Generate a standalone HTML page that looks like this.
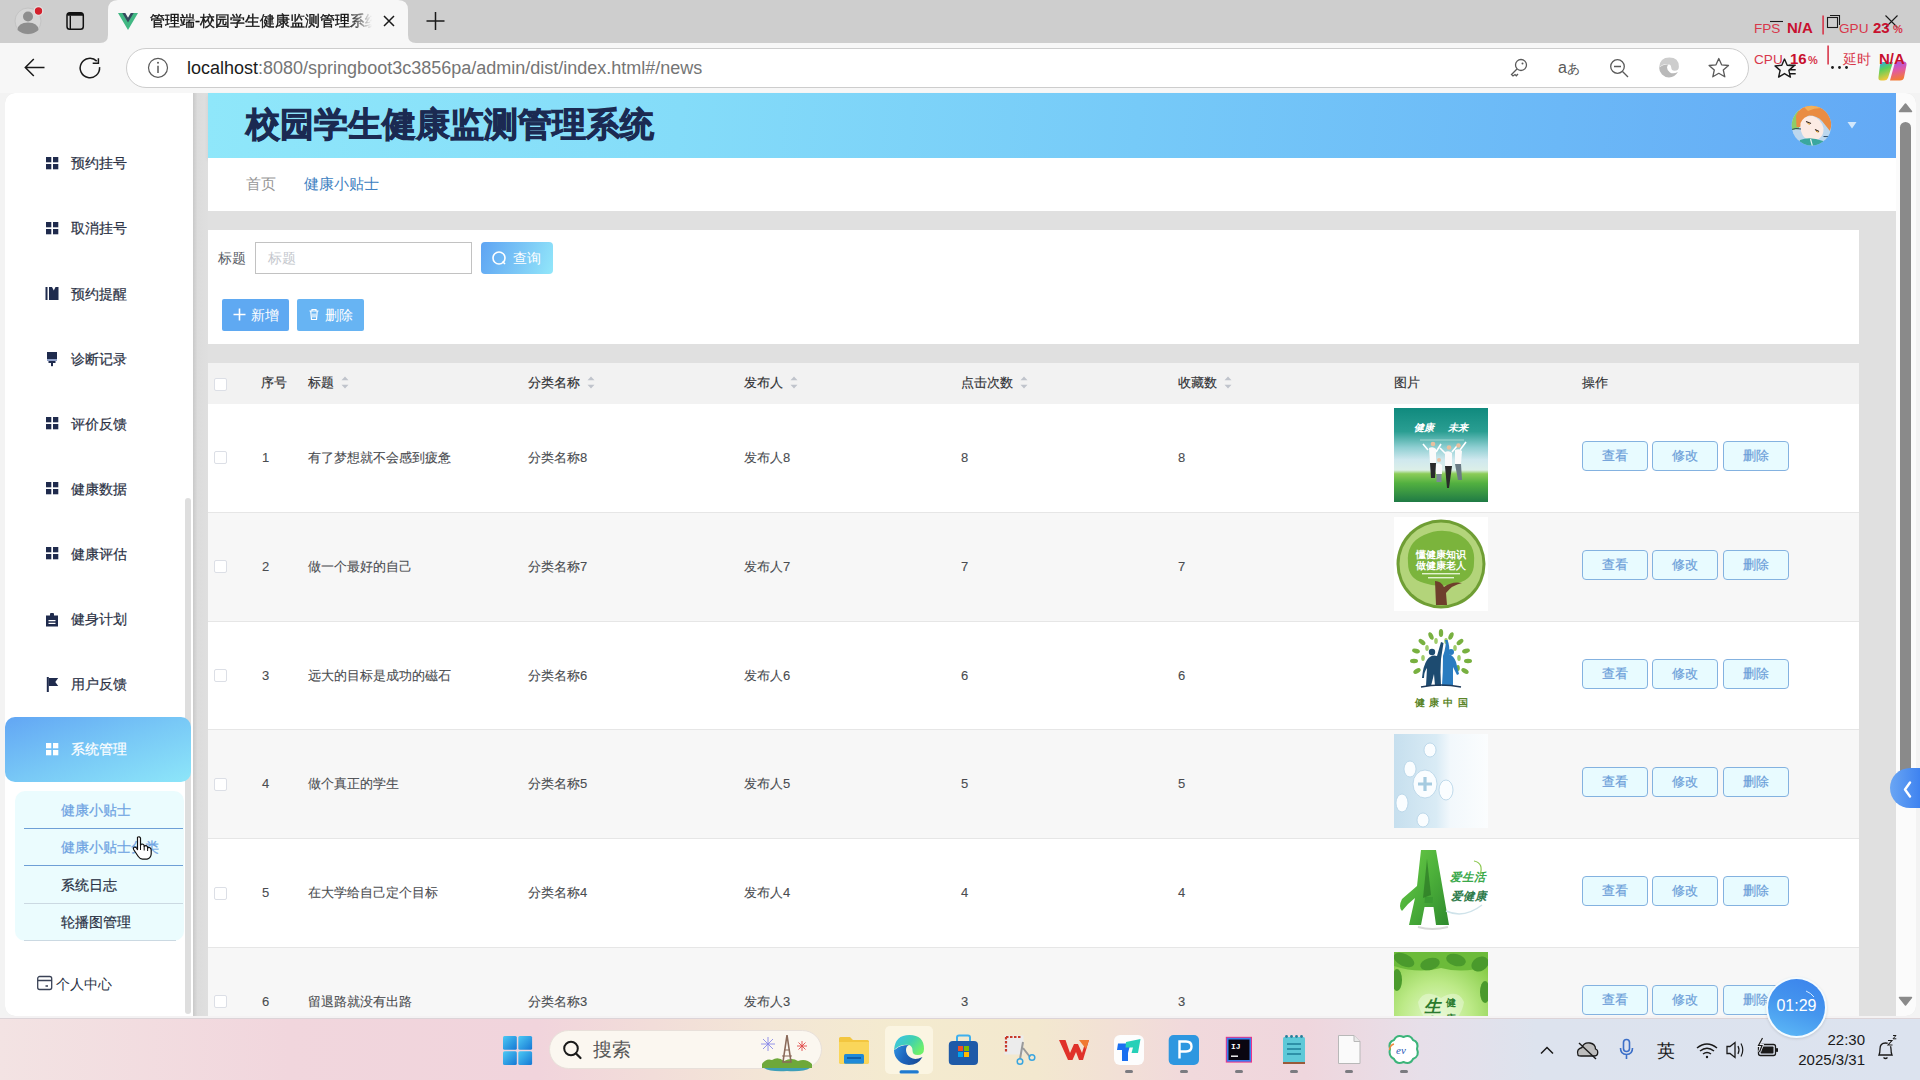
<!DOCTYPE html>
<html><head><meta charset="utf-8">
<style>
*{box-sizing:border-box;margin:0;padding:0}
html,body{width:1920px;height:1080px;overflow:hidden;background:#f3f3f3;font-family:"Liberation Sans",sans-serif;}
.abs{position:absolute}
#tabbar{left:0;top:0;width:1920px;height:43px;background:#cecece}
#tab{left:108px;top:0;width:300px;height:43px;background:#f7f7f7;border-radius:0 0 0 0}
#toolbar{left:0;top:43px;width:1920px;height:50px;background:#f7f7f7}
#addr{left:126px;top:48px;width:1623px;height:40px;background:#fff;border:1px solid #cdcdcd;border-radius:20px}
#viewport{left:0;top:93px;width:1916px;height:923px;background:#e0e0e0;overflow:hidden;border-radius:0 0 10px 10px}
#sidebar{left:5px;top:0;width:188px;height:923px;background:#fff;border-radius:10px 0 0 10px}
#sbstrip{left:193px;top:0;width:15px;height:923px;background:linear-gradient(90deg,#c9c9c9,#dcdcdc 30%,#dfdfdf)}
#taskbar{left:0;top:1019px;width:1920px;height:61px;background:linear-gradient(90deg,#f3e3e3 0%,#f1d6dd 15%,#f1d4dc 28%,#f3e6d6 40%,#f4ebcf 47%,#f3e8cf 54%,#f1d9dc 62%,#efd6dd 68%,#e7dfe9 74%,#dde3ee 80%,#dce3ef 100%)}

.menu{left:71px;font-size:14px;line-height:22px;color:#2b3245;white-space:nowrap;-webkit-text-stroke:0.2px currentColor}
.sub{left:61px;font-size:14px;line-height:22px;color:#2a3245;white-space:nowrap;-webkit-text-stroke:0.2px currentColor}
#viewport{left:5px;top:93px;width:1911px;height:923px;background:#e0e0e0;border-radius:10px 10px 10px 10px}
#sidebar{left:5px;top:93px;width:188px;height:923px;background:#fff;border-radius:10px 0 0 10px}
#sbstrip{left:193px;top:93px;width:15px;height:923px;background:linear-gradient(90deg,#c9c9c9,#dcdcdc 30%,#dfdfdf)}
#header{left:208px;top:93px;width:1688px;height:65px;background:linear-gradient(95deg,#8fe7fa 0%,#84dcf9 28%,#76caf8 55%,#6bb8f7 80%,#63a9f5 100%);box-shadow:0 2px 4px rgba(0,0,0,0.08)}
#crumb{left:208px;top:158px;width:1688px;height:53px;background:#fff}
#search{left:208px;top:230px;width:1651px;height:114px;background:#fff}
#table{left:208px;top:363px;width:1651px;height:653px;background:#fff}
#vscroll{left:1896px;top:93px;width:20px;height:923px;background:#fbfbfb;border-radius:0 10px 10px 0}
.cb{width:13px;height:13px;border:1px solid #dcdfe6;border-radius:2px;background:#fff}
.th{font-size:13px;line-height:22px;color:#2f3033;white-space:nowrap;-webkit-text-stroke:0.15px currentColor}
.td{font-size:13px;line-height:22px;color:#4a4c50;white-space:nowrap;-webkit-text-stroke:0.1px currentColor}
.opb{width:66px;height:30px;border:1px solid #84b2e0;border-radius:4px;background:#e8fbff;color:#6d9fd9;font-size:13px;line-height:28px;text-align:center;-webkit-text-stroke:0.2px currentColor}
</style></head><body>

<div id="tabbar" class="abs"></div>
<svg class="abs" style="left:0;top:0" width="460" height="44">
  <!-- profile -->
  <circle cx="28" cy="21" r="13" fill="#d6d6d6" stroke="#c4c4c4" stroke-width="1"/>
  <circle cx="28" cy="16.5" r="5" fill="#8e8e8e"/>
  <path d="M17.5 30 Q18 22.5 28 22.5 Q38 22.5 38.5 30 Q34 34 28 34 Q22 34 17.5 30Z" fill="#8e8e8e"/>
  <circle cx="38.5" cy="11" r="4.3" fill="#d4202c" stroke="#e2e2e2" stroke-width="1.2"/>
  <!-- tab actions -->
  <rect x="67" y="12.8" width="16.3" height="16.5" rx="2.8" fill="none" stroke="#111" stroke-width="1.5"/>
  <path d="M67.5 14.5 Q67.5 12.5 70 12.5 H80.5 Q83 12.5 83 14.5 V15.8 H67.5Z" fill="#111"/>
  <path d="M70.3 15.5 V29" stroke="#111" stroke-width="1.4" fill="none"/>
  <!-- tab shape -->
  <path d="M100 43 Q108 43 108 35 V10 Q108 0 118 0 H398 Q408 0 408 10 V35 Q408 43 416 43Z" fill="#f7f7f7"/>
  <!-- vue logo -->
  <path d="M118 13 H124.5 L128 19 L131.5 13 H138 L128 30Z" fill="#41b883"/>
  <path d="M122.3 13 H125.3 L128 17.8 L130.7 13 H133.7 L128 22.5Z" fill="#35495e"/>
  <!-- close -->
  <path d="M384 16 L394 26 M394 16 L384 26" stroke="#1a1a1a" stroke-width="1.5"/>
  <!-- plus -->
  <path d="M435.5 12 V30 M426.5 21 H444.5" stroke="#1a1a1a" stroke-width="1.5"/>
</svg>
<div class="abs" style="left:150px;top:10px;width:222px;height:24px;overflow:hidden;white-space:nowrap;font-size:15px;line-height:22px;color:#111;-webkit-text-stroke:0.35px #111;-webkit-mask-image:linear-gradient(90deg,#000 90%,transparent 100%)">管理端-校园学生健康监测管理系统</div>
<div id="toolbar" class="abs"></div>
<svg class="abs" style="left:0;top:43px" width="180" height="50">
  <path d="M25.5 24.5 H44.5 M33.8 16 L25.3 24.5 L33.8 33" stroke="#1a1a1a" stroke-width="1.5" fill="none"/>
  <path d="M99.56 24.15 A9.7 9.7 0 1 1 96.76 18.14" stroke="#1a1a1a" stroke-width="1.5" fill="none"/>
  <path d="M98.4 15.3 V20.3 H92.7" stroke="#1a1a1a" stroke-width="1.5" fill="none"/>
</svg>
<div id="addr" class="abs"></div>
<svg class="abs" style="left:140px;top:50px" width="40" height="36">
  <circle cx="18" cy="17.8" r="9.5" fill="none" stroke="#5a5a5a" stroke-width="1.2"/>
  <path d="M18 15.8 V23" stroke="#5a5a5a" stroke-width="1.5"/>
  <circle cx="18" cy="12.8" r="1" fill="#5a5a5a"/>
</svg>
<div class="abs" style="left:187px;top:55.5px;font-size:18px;line-height:24px;color:#757575;white-space:nowrap"><span style="color:#1b1b1b">localhost</span>:8080/springboot3c3856pa/admin/dist/index.html#/news</div>
<svg class="abs" style="left:1500px;top:50px" width="420" height="40">
  <!-- key -->
  <circle cx="21" cy="15" r="5.5" fill="none" stroke="#5a5a5a" stroke-width="1.3"/>
  <circle cx="22.5" cy="13.5" r="1" fill="#5a5a5a"/>
  <path d="M17 19 L11.5 24.5 L13 26 L15 24.5 L16.3 25.8 L18 24" fill="none" stroke="#5a5a5a" stroke-width="1.3"/>
  <!-- a あ -->
  <text x="58" y="23" font-size="16" fill="#5a5a5a" font-family="Liberation Sans">a</text>
  <text x="67" y="23" font-size="12.5" fill="#5a5a5a">あ</text>
  <!-- zoom out -->
  <circle cx="117.5" cy="16.5" r="6.8" fill="none" stroke="#5a5a5a" stroke-width="1.3"/>
  <path d="M114 16.5 H121 M122.5 21.5 L128 27" stroke="#5a5a5a" stroke-width="1.4"/>
  <!-- edge -->
  <g transform="translate(169,17.5) scale(0.66) translate(-909,-31)">
    <path d="M894 31 A15 15 0 0 0 909 46 Q918 46 922.5 38 Q915 41.5 910.5 38.5 Q906 35.5 906 31 Q906 27 909 26 Q900 26 896 30Z" fill="#b9b9b9"/>
    <path d="M894 31 Q895 16 909.5 16 Q924 16 924 30 Q924 36 917.5 36 Q912.5 36 912.5 31.5 Q912.5 27 909 26 Q900 25 894 31Z" fill="#cdcdcd"/>
  </g>
  <!-- star -->
  <path d="M218.8 8.5 L221.6 14.8 L228.5 15.5 L223.3 20 L224.8 26.8 L218.8 23.3 L212.8 26.8 L214.3 20 L209.1 15.5 L216 14.8Z" fill="none" stroke="#5a5a5a" stroke-width="1.3" stroke-linejoin="round"/>
</svg>
<svg class="abs" style="left:1740px;top:0" width="180" height="93">
  <!-- window controls -->
  <path d="M30 21.5 H43" stroke="#1a1a1a" stroke-width="1.1"/>
  <rect x="87.5" y="17.5" width="10" height="10" fill="none" stroke="#1a1a1a" stroke-width="1.1"/>
  <path d="M90 15.5 H99.5 V25" fill="none" stroke="#1a1a1a" stroke-width="1.1"/>
  <path d="M145.5 15.5 L157.5 27.5 M157.5 15.5 L145.5 27.5" stroke="#1a1a1a" stroke-width="1.1"/>
  <!-- favorites -->
  <g transform="translate(44.5,68.5) scale(1.18) translate(-45,-68)"><path d="M45 60 L47.3 65.3 L53 65.8 L48.7 69.6 L50 75.3 L45 72.3 L40 75.3 L41.3 69.6 L37 65.8 L42.7 65.3Z" fill="none" stroke="#1a1a1a" stroke-width="1.2" stroke-linejoin="round"/>
  <path d="M48.5 65.3 H54.5 M49 69 H54.5 M49 72.5 H54.5" stroke="#1a1a1a" stroke-width="1.2"/></g>
  <!-- dots -->
  <circle cx="92.5" cy="67.5" r="1.4" fill="#1a1a1a"/><circle cx="99.5" cy="67.5" r="1.4" fill="#1a1a1a"/><circle cx="106.5" cy="67.5" r="1.4" fill="#1a1a1a"/>
  <!-- copilot -->
  <defs>
    <linearGradient id="cpg1" x1="0" y1="0" x2="0.3" y2="1"><stop offset="0" stop-color="#2aa6f2"/><stop offset="0.45" stop-color="#5ccf5a"/><stop offset="1" stop-color="#f0c83a"/></linearGradient>
    <linearGradient id="cpg2" x1="0" y1="0" x2="0.2" y2="1"><stop offset="0" stop-color="#9a58f2"/><stop offset="0.5" stop-color="#e058a8"/><stop offset="1" stop-color="#f27a38"/></linearGradient>
  </defs>
  <path d="M142 62 H153 L148 78 Q147 80.5 144 80.5 H141 Q138 80.5 138.5 77 L140 65 Q140.5 62 142 62Z" fill="url(#cpg1)"/>
  <path d="M157 61.5 H163.5 Q167 61.5 166.5 65 L164 77.5 Q163.5 80.5 160 80.5 H150 L154.5 64 Q155.5 61.5 157 61.5Z" fill="url(#cpg2)"/>
  <!-- overlay text -->
  <g font-family="Liberation Sans" fill="#d8374b">
    <text x="14" y="32.5" font-size="13.6">FPS</text>
    <text x="47" y="32.5" font-size="15" font-weight="bold" fill="#c8102e">N/A</text>
    <rect x="82.3" y="15.5" width="1.6" height="19"/>
    <text x="99" y="32.5" font-size="13.6">GPU</text>
    <text x="133" y="32.5" font-size="15" font-weight="bold" fill="#c8102e">23</text>
    <text x="153" y="32.5" font-size="11" font-weight="bold">%</text>
    <text x="14" y="63.5" font-size="13.6">CPU</text>
    <text x="50" y="63.5" font-size="15" font-weight="bold" fill="#c8102e">16</text>
    <text x="68" y="63.5" font-size="11" font-weight="bold">%</text>
    <rect x="87.3" y="45.5" width="1.6" height="19"/>
    <text x="103" y="63.5" font-size="14">延时</text>
    <text x="139" y="63.5" font-size="15" font-weight="bold" fill="#c8102e">N/A</text>
  </g>
</svg>
<div id="viewport" class="abs"></div>
<div id="sidebar" class="abs"></div>
<div id="sbstrip" class="abs"></div>
<!-- sidebar scrollbar thumb -->
<div class="abs" style="left:185px;top:498px;width:6px;height:516px;background:#dedede;border-radius:3px"></div>
<!-- menu -->
<svg class="abs" style="left:40px;top:150px" width="30" height="560" fill="#1f2b4d">
  <g transform="translate(6,7)"><rect x="0" y="0" width="5.3" height="5.3"/><rect x="7" y="0" width="5.3" height="5.3"/><rect x="0" y="7" width="5.3" height="5.3"/><rect x="7" y="7" width="5.3" height="5.3"/></g>
  <g transform="translate(6,72)"><rect x="0" y="0" width="5.3" height="5.3"/><rect x="7" y="0" width="5.3" height="5.3"/><rect x="0" y="7" width="5.3" height="5.3"/><rect x="7" y="7" width="5.3" height="5.3"/></g>
  <g transform="translate(5.5,137)"><rect x="0" y="0" width="2" height="13"/><path d="M3.5 0 H13 V13 H3.5Z M6.5 0 L8.3 3.5 L10 0Z" fill-rule="evenodd"/></g>
  <g transform="translate(7,202)"><rect x="0" y="0" width="10" height="7"/><rect x="0" y="7" width="10" height="2" fill="#8fa0c8"/><path d="M1.5 9 H8.5 V11 H6 V14 Q5 14.6 4 14 V11 H1.5Z"/></g>
  <g transform="translate(6,267)"><rect x="0" y="0" width="5.3" height="5.3"/><rect x="7" y="0" width="5.3" height="5.3"/><rect x="0" y="7" width="5.3" height="5.3"/><rect x="7" y="7" width="5.3" height="5.3"/></g>
  <g transform="translate(6,332)"><rect x="0" y="0" width="5.3" height="5.3"/><rect x="7" y="0" width="5.3" height="5.3"/><rect x="0" y="7" width="5.3" height="5.3"/><rect x="7" y="7" width="5.3" height="5.3"/></g>
  <g transform="translate(6,397)"><rect x="0" y="0" width="5.3" height="5.3"/><rect x="7" y="0" width="5.3" height="5.3"/><rect x="0" y="7" width="5.3" height="5.3"/><rect x="7" y="7" width="5.3" height="5.3"/></g>
  <g transform="translate(6,463)"><path d="M0 2.5 H4 V1 Q4 0 5 0 H7 Q8 0 8 1 V2.5 H12 V13.5 H0Z M2.5 7 H9.5 V8.2 H2.5Z M2.5 9.8 H9.5 V11 H2.5Z" fill-rule="evenodd"/></g>
  <g transform="translate(6.8,527)"><rect x="0" y="0" width="2" height="15"/><path d="M2 1 H11.4 L8.5 5 L11.4 9 H2Z"/></g>
</svg>
<div class="abs menu" style="top:152px">预约挂号</div>
<div class="abs menu" style="top:217px">取消挂号</div>
<div class="abs menu" style="top:283px">预约提醒</div>
<div class="abs menu" style="top:348px">诊断记录</div>
<div class="abs menu" style="top:413px">评价反馈</div>
<div class="abs menu" style="top:478px">健康数据</div>
<div class="abs menu" style="top:543px">健康评估</div>
<div class="abs menu" style="top:608px">健身计划</div>
<div class="abs menu" style="top:673px">用户反馈</div>
<div class="abs" style="left:5px;top:717px;width:186px;height:65px;border-radius:10px;background:linear-gradient(160deg,#62a6f4 0%,#78c8f6 50%,#8de6f9 100%)"></div>
<svg class="abs" style="left:46px;top:743px" width="14" height="14" fill="#fff"><rect x="0" y="0" width="5.3" height="5.3"/><rect x="7" y="0" width="5.3" height="5.3"/><rect x="0" y="7" width="5.3" height="5.3"/><rect x="7" y="7" width="5.3" height="5.3"/></svg>
<div class="abs menu" style="top:738px;color:#fff">系统管理</div>
<div class="abs" style="left:15px;top:791px;width:169px;height:150px;border-radius:10px;background:#ebfcfe"></div>
<div class="abs" style="left:24px;top:828px;width:159px;height:1px;background:#6e9fd6"></div>
<div class="abs" style="left:24px;top:865px;width:159px;height:1px;background:#6e9fd6"></div>
<div class="abs" style="left:24px;top:903px;width:159px;height:1px;background:#cbd9e2"></div>
<div class="abs" style="left:24px;top:940px;width:152px;height:1px;background:#cbd9e2"></div>
<div class="abs sub" style="top:799px;color:#6ea3e2">健康小贴士</div>
<div class="abs sub" style="top:836px;color:#6ea3e2">健康小贴士分类</div>
<div class="abs sub" style="top:874px">系统日志</div>
<div class="abs sub" style="top:911px">轮播图管理</div>
<svg class="abs" style="left:36px;top:975px" width="18" height="18"><rect x="1.7" y="1.5" width="14" height="13" rx="2" fill="none" stroke="#3a4256" stroke-width="1.3"/><path d="M2 5.5 H16 M9.5 11 H12" stroke="#3a4256" stroke-width="1.3"/></svg>
<div class="abs" style="left:56px;top:973px;font-size:14px;line-height:22px;color:#2a3245">个人中心</div>
<!-- cursor -->
<svg class="abs" style="left:131px;top:835px" width="22" height="26">
  <path d="M6.5 2.2 Q8.5 1 9.5 3 V10.5 Q10 8.6 12 9.3 Q13.3 9.9 13.2 11.5 Q14.2 10.1 15.8 10.9 Q16.8 11.6 16.6 13 Q17.7 12 19 12.8 Q20.3 13.7 20.2 15.5 V19 Q19.8 23.3 16 24.2 H11.5 Q9 24 7.3 21.5 L2.6 14.5 Q1.8 13 3 12.2 Q4.4 11.6 5.5 13 L6.5 14.6 Z" fill="#fff" stroke="#111" stroke-width="1.2" stroke-linejoin="round"/>
  <path d="M9.5 10.5 V15 M13.2 11.5 V15.5 M16.6 13 V16" stroke="#111" stroke-width="1"/>
</svg>
<div id="header" class="abs"></div>
<div class="abs" style="left:246px;top:101px;font-size:34px;line-height:46px;font-weight:bold;color:#1b2a52;-webkit-text-stroke:0.9px #1b2a52;white-space:nowrap">校园学生健康监测管理系统</div>
<svg class="abs" style="left:1788px;top:102px" width="48" height="48">
  <defs><clipPath id="avc"><circle cx="23.5" cy="23.6" r="19.8"/></clipPath></defs>
  <g clip-path="url(#avc)">
    <rect x="0" y="0" width="48" height="48" fill="#bcd7ee"/>
    <path d="M2 8 L11 6 L11 27 L2 28Z" fill="#8dcc68"/>
    <path d="M8 14 Q13 2 25 3 Q39 4 43 17 Q44 23 42 29 Q38 24 34 19 Q29 13.5 21 13.5 Q15 15.5 12.5 25 L8.5 25Z" fill="#e98c42"/>
    <path d="M16 5 Q24 2 33 6 Q26 6 20 9Z" fill="#f4b058"/>
    <path d="M12.5 21 Q16 13 24.5 14 Q33 16.5 35.5 26 Q36 34 30 37.5 Q22 39.5 16.5 35.5 Q11.5 30 12.5 21Z" fill="#fcebe4"/>
    <path d="M18 19.5 L23 21.5 M27 27.5 L31 29.5" stroke="#3a2a20" stroke-width="1.3"/>
    <path d="M19.5 21.5 L22 22.3 M28 29.3 L30.5 30.3" stroke="#e0a030" stroke-width="1"/>
    <path d="M12 38 Q22 34 35 39 L39 48 H9Z" fill="#3aa79e"/>
    <path d="M22.5 37 L25.5 48" stroke="#e6f2f2" stroke-width="1.2"/>
    <path d="M2 28 Q8 25.5 13 27 M35.5 34.5 Q40 34 44 36" stroke="#1c3a58" stroke-width="0.9" fill="none"/>
  </g>
</svg>
<svg class="abs" style="left:1846px;top:121px" width="12" height="9"><path d="M1.5 1 H10.5 L6 7.5Z" fill="#d2e8fc"/></svg>
<div id="crumb" class="abs"></div>
<div class="abs" style="left:246px;top:173px;font-size:15px;line-height:22px;color:#979797">首页</div>
<div class="abs" style="left:304px;top:173px;font-size:15px;line-height:22px;color:#3e7fc1">健康小贴士</div>
<div id="search" class="abs"></div>
<div class="abs" style="left:218px;top:247px;font-size:14px;line-height:22px;color:#555a63">标题</div>
<div class="abs" style="left:255px;top:242px;width:217px;height:32px;border:1px solid #c2c2c2;background:#fff"></div>
<div class="abs" style="left:268px;top:247px;font-size:14px;line-height:22px;color:#c4c7cd">标题</div>
<div class="abs" style="left:481px;top:242px;width:72px;height:32px;border-radius:4px;background:linear-gradient(110deg,#5ea4f3 0%,#7bc7f6 55%,#92e7fa 100%)"></div>
<svg class="abs" style="left:490px;top:249px" width="18" height="18"><circle cx="9" cy="9" r="6" fill="none" stroke="#fff" stroke-width="1.6"/><path d="M12.5 12.5 L15 15" stroke="#fff" stroke-width="1.6"/></svg>
<div class="abs" style="left:513px;top:247px;font-size:14px;line-height:22px;color:#fff">查询</div>
<div class="abs" style="left:222px;top:299px;width:67px;height:32px;border-radius:2px;background:#5fa9f2"></div>
<svg class="abs" style="left:232px;top:307px" width="16" height="16"><path d="M7.5 1.5 V13.5 M1.5 7.5 H13.5" stroke="#fff" stroke-width="1.6"/></svg>
<div class="abs" style="left:251px;top:304px;font-size:14px;line-height:22px;color:#fff">新增</div>
<div class="abs" style="left:297px;top:299px;width:67px;height:32px;border-radius:2px;background:#67b4f3"></div>
<svg class="abs" style="left:307px;top:307px" width="16" height="16"><path d="M2.5 4 H11.5 M5 4 V2.5 H9 V4 M3.8 4.5 L4.5 12.5 H9.5 L10.2 4.5 M6 6.5 V10.5 M8 6.5 V10.5" stroke="#fff" stroke-width="1.2" fill="none"/></svg>
<div class="abs" style="left:325px;top:304px;font-size:14px;line-height:22px;color:#fff">删除</div>
<div id="table" class="abs"></div>
<!--TABLE-->
<div class="abs" style="left:208px;top:363px;width:1651px;height:41px;background:#f2f2f2"></div>
<div class="abs cb" style="left:214px;top:378px"></div>
<div class="abs th" style="left:261px;top:372px">序号</div>
<div class="abs th" style="left:308px;top:372px">标题</div>
<svg class="abs" style="left:341px;top:375px" width="9" height="15"><path d="M0.5 5.3 L4 1.4 L7.5 5.3Z M0.5 9.7 L4 13.6 L7.5 9.7Z" fill="#c0c4cc"/></svg>
<div class="abs th" style="left:528px;top:372px">分类名称</div>
<svg class="abs" style="left:587px;top:375px" width="9" height="15"><path d="M0.5 5.3 L4 1.4 L7.5 5.3Z M0.5 9.7 L4 13.6 L7.5 9.7Z" fill="#c0c4cc"/></svg>
<div class="abs th" style="left:744px;top:372px">发布人</div>
<svg class="abs" style="left:790px;top:375px" width="9" height="15"><path d="M0.5 5.3 L4 1.4 L7.5 5.3Z M0.5 9.7 L4 13.6 L7.5 9.7Z" fill="#c0c4cc"/></svg>
<div class="abs th" style="left:961px;top:372px">点击次数</div>
<svg class="abs" style="left:1020px;top:375px" width="9" height="15"><path d="M0.5 5.3 L4 1.4 L7.5 5.3Z M0.5 9.7 L4 13.6 L7.5 9.7Z" fill="#c0c4cc"/></svg>
<div class="abs th" style="left:1178px;top:372px">收藏数</div>
<svg class="abs" style="left:1224px;top:375px" width="9" height="15"><path d="M0.5 5.3 L4 1.4 L7.5 5.3Z M0.5 9.7 L4 13.6 L7.5 9.7Z" fill="#c0c4cc"/></svg>
<div class="abs th" style="left:1394px;top:372px">图片</div>
<div class="abs th" style="left:1582px;top:372px">操作</div>
<div class="abs" style="left:208px;top:404.0px;width:1651px;height:107.8px;background:#fff"></div>
<div class="abs" style="left:208px;top:511.8px;width:1651px;height:1px;background:#e6e6e6"></div>
<div class="abs cb" style="left:214px;top:451.4px"></div>
<div class="abs td" style="left:262px;top:446.9px">1</div>
<div class="abs td" style="left:308px;top:446.9px">有了梦想就不会感到疲惫</div>
<div class="abs td" style="left:528px;top:446.9px">分类名称8</div>
<div class="abs td" style="left:744px;top:446.9px">发布人8</div>
<div class="abs td" style="left:961px;top:446.9px">8</div>
<div class="abs td" style="left:1178px;top:446.9px">8</div>
<svg class="abs" style="left:1394px;top:408.0px" width="94" height="94" font-family="Liberation Sans"><defs><linearGradient id="g1" x1="0" y1="0" x2="0" y2="1"><stop offset="0" stop-color="#108a7e"/><stop offset="0.25" stop-color="#2a9e92"/><stop offset="0.42" stop-color="#8fcfd2"/><stop offset="0.55" stop-color="#cfe8ee"/><stop offset="0.66" stop-color="#dcefe8"/><stop offset="0.7" stop-color="#8ccc58"/><stop offset="0.8" stop-color="#52b040"/><stop offset="1" stop-color="#1f7a45"/></linearGradient></defs>
<rect width="94" height="94" fill="url(#g1)"/>
<text x="20" y="23" font-size="10" fill="#fff" font-weight="bold" font-style="italic">健康</text><text x="54" y="23" font-size="10" fill="#fff" font-weight="bold" font-style="italic">未来</text>
<path d="M26 32 H70" stroke="#bfe6de" stroke-width="0.7"/>
<g stroke="#fff" stroke-width="1.6" fill="none"><path d="M34 42 L29 36 M42 44 L47 36 M52 46 L46 40 M58 44 L63 38 M66 42 L72 34"/></g>
<g fill="#fafafa"><path d="M35 40 Q39 38 42 41 L42 55 H36Z"/><path d="M51 44 Q55 42 58 45 L58 58 H51Z"/><path d="M61 42 Q65 40 68 43 L67 56 H61Z"/><path d="M42 56 Q45 54 48 57 L48 66 H42Z"/></g>
<g fill="#2a2a2a"><path d="M36 55 H42 L41 70 H37Z"/><path d="M51 58 H58 L55 80 H53Z"/><path d="M61 56 H67 L68 72 H64Z" fill="#6a7a84"/><path d="M42.5 66 H47.5 V74 H42.5Z" fill="#7a8a94"/></g>
<g fill="#e8c0a0"><circle cx="39" cy="36" r="2.3"/><circle cx="55" cy="39.5" r="2.3"/><circle cx="64.5" cy="37.5" r="2.3"/><circle cx="45" cy="52" r="2"/></g></svg>
<div class="abs opb" style="left:1582px;top:440.9px">查看</div>
<div class="abs opb" style="left:1652px;top:440.9px">修改</div>
<div class="abs opb" style="left:1723px;top:440.9px">删除</div>
<div class="abs" style="left:208px;top:512.8px;width:1651px;height:107.8px;background:#f7f7f7"></div>
<div class="abs" style="left:208px;top:620.6px;width:1651px;height:1px;background:#e6e6e6"></div>
<div class="abs cb" style="left:214px;top:560.2px"></div>
<div class="abs td" style="left:262px;top:555.7px">2</div>
<div class="abs td" style="left:308px;top:555.7px">做一个最好的自己</div>
<div class="abs td" style="left:528px;top:555.7px">分类名称7</div>
<div class="abs td" style="left:744px;top:555.7px">发布人7</div>
<div class="abs td" style="left:961px;top:555.7px">7</div>
<div class="abs td" style="left:1178px;top:555.7px">7</div>
<svg class="abs" style="left:1394px;top:516.8px" width="94" height="94" font-family="Liberation Sans"><rect width="94" height="94" fill="#fff"/>
<circle cx="47" cy="47" r="44.5" fill="#6f9e34"/>
<circle cx="47" cy="47" r="41.5" fill="#b3d47a"/>
<path d="M14 46 Q12 26 30 18 Q47 10 64 17 Q82 26 80 46 Q80 62 64 66 Q47 72 30 66 Q14 62 14 46Z" fill="#7bb43c"/>
<path d="M41 64 L42 88 H53 L52 76 Q58 68 68 66 Q58 64 50 70 Q47 64 41 64Z" fill="#6e3f2c"/>
<text x="22" y="41" font-size="10" fill="#fff" font-weight="bold">懂健康知识</text>
<text x="22" y="52" font-size="10" fill="#fff" font-weight="bold">做健康老人</text>
<rect x="28" y="56" width="38" height="1.4" fill="#e4f2d0"/><rect x="34" y="60" width="26" height="1.4" fill="#e4f2d0"/></svg>
<div class="abs opb" style="left:1582px;top:549.7px">查看</div>
<div class="abs opb" style="left:1652px;top:549.7px">修改</div>
<div class="abs opb" style="left:1723px;top:549.7px">删除</div>
<div class="abs" style="left:208px;top:621.6px;width:1651px;height:107.8px;background:#fff"></div>
<div class="abs" style="left:208px;top:729.4px;width:1651px;height:1px;background:#e6e6e6"></div>
<div class="abs cb" style="left:214px;top:669.0px"></div>
<div class="abs td" style="left:262px;top:664.5px">3</div>
<div class="abs td" style="left:308px;top:664.5px">远大的目标是成功的磁石</div>
<div class="abs td" style="left:528px;top:664.5px">分类名称6</div>
<div class="abs td" style="left:744px;top:664.5px">发布人6</div>
<div class="abs td" style="left:961px;top:664.5px">6</div>
<div class="abs td" style="left:1178px;top:664.5px">6</div>
<svg class="abs" style="left:1394px;top:625.6px" width="94" height="94" font-family="Liberation Sans"><rect width="94" height="94" fill="#fff"/>
<g fill="#78b040">
<ellipse cx="47" cy="7" rx="2.2" ry="4"/>
<ellipse cx="37" cy="10" rx="2.2" ry="4" transform="rotate(-25 37 10)"/><ellipse cx="57" cy="10" rx="2.2" ry="4" transform="rotate(25 57 10)"/>
<ellipse cx="28" cy="16" rx="2.2" ry="4" transform="rotate(-50 28 16)"/><ellipse cx="66" cy="16" rx="2.2" ry="4" transform="rotate(50 66 16)"/>
<ellipse cx="22" cy="25" rx="2.2" ry="4" transform="rotate(-75 22 25)"/><ellipse cx="72" cy="25" rx="2.2" ry="4" transform="rotate(75 72 25)"/>
<ellipse cx="20" cy="35" rx="2.2" ry="4" transform="rotate(90 20 35)"/><ellipse cx="74" cy="35" rx="2.2" ry="4" transform="rotate(90 74 35)"/>
<ellipse cx="23" cy="45" rx="2.2" ry="4" transform="rotate(60 23 45)"/><ellipse cx="71" cy="45" rx="2.2" ry="4" transform="rotate(-60 71 45)"/>
<ellipse cx="42" cy="15" rx="1.8" ry="3" fill="#a0cc6a"/><ellipse cx="52" cy="15" rx="1.8" ry="3" fill="#a0cc6a"/><ellipse cx="33" cy="22" rx="1.8" ry="3" fill="#a0cc6a"/><ellipse cx="61" cy="22" rx="1.8" ry="3" fill="#a0cc6a"/><ellipse cx="29" cy="32" rx="1.8" ry="3" fill="#a0cc6a"/><ellipse cx="65" cy="32" rx="1.8" ry="3" fill="#a0cc6a"/><ellipse cx="64" cy="42" rx="1.8" ry="3"/></g>
<path d="M33 34 Q37 28 43 30 L47 16 L49.5 17 L47 33 Q46 46 47 60 H41 L40 48 L37 60 H32 L33 42 Q30 46 30 52 L28 52 Q29 40 33 34Z" fill="#1d4b70"/>
<circle cx="38" cy="26" r="3.2" fill="#1d4b70"/>
<path d="M49 30 Q53 18 51 14 L53.5 14 Q56 20 55 28 Q60 30 62 36 L65 48 L63 49 L59 41 V60 H48 Q49 46 49 30Z" fill="#2a7cc0"/>
<circle cx="57" cy="26" r="3" fill="#2a7cc0"/>
<path d="M27 61 Q47 57 67 61" stroke="#1e3a5a" stroke-width="1.6" fill="none"/>
<text x="21" y="80" font-size="9.5" font-weight="bold" fill="#5a8428" letter-spacing="4.2">健康中国</text></svg>
<div class="abs opb" style="left:1582px;top:658.5px">查看</div>
<div class="abs opb" style="left:1652px;top:658.5px">修改</div>
<div class="abs opb" style="left:1723px;top:658.5px">删除</div>
<div class="abs" style="left:208px;top:730.4px;width:1651px;height:107.8px;background:#f7f7f7"></div>
<div class="abs" style="left:208px;top:838.2px;width:1651px;height:1px;background:#e6e6e6"></div>
<div class="abs cb" style="left:214px;top:777.8px"></div>
<div class="abs td" style="left:262px;top:773.3px">4</div>
<div class="abs td" style="left:308px;top:773.3px">做个真正的学生</div>
<div class="abs td" style="left:528px;top:773.3px">分类名称5</div>
<div class="abs td" style="left:744px;top:773.3px">发布人5</div>
<div class="abs td" style="left:961px;top:773.3px">5</div>
<div class="abs td" style="left:1178px;top:773.3px">5</div>
<svg class="abs" style="left:1394px;top:734.4px" width="94" height="94" font-family="Liberation Sans"><defs><linearGradient id="g4" x1="0" y1="0" x2="1" y2="0"><stop offset="0" stop-color="#c6dfee"/><stop offset="0.45" stop-color="#d9ebf5"/><stop offset="0.6" stop-color="#f2f8fc"/><stop offset="1" stop-color="#fbfdfe"/></linearGradient></defs>
<rect width="94" height="94" fill="url(#g4)"/>
<g fill="#fafdff" stroke="#b2d2e6" stroke-width="0.8"><ellipse cx="16" cy="35" rx="6" ry="8"/><ellipse cx="36" cy="16" rx="6" ry="7"/><ellipse cx="31" cy="50" rx="12" ry="14"/><ellipse cx="52" cy="56" rx="7" ry="10"/><ellipse cx="8" cy="69" rx="6" ry="9"/><ellipse cx="29" cy="86" rx="6" ry="7"/></g>
<path d="M31 43 V57 M24 50 H38" stroke="#a6cbe0" stroke-width="3.2"/></svg>
<div class="abs opb" style="left:1582px;top:767.3px">查看</div>
<div class="abs opb" style="left:1652px;top:767.3px">修改</div>
<div class="abs opb" style="left:1723px;top:767.3px">删除</div>
<div class="abs" style="left:208px;top:839.2px;width:1651px;height:107.8px;background:#fff"></div>
<div class="abs" style="left:208px;top:947.0px;width:1651px;height:1px;background:#e6e6e6"></div>
<div class="abs cb" style="left:214px;top:886.6px"></div>
<div class="abs td" style="left:262px;top:882.1px">5</div>
<div class="abs td" style="left:308px;top:882.1px">在大学给自己定个目标</div>
<div class="abs td" style="left:528px;top:882.1px">分类名称4</div>
<div class="abs td" style="left:744px;top:882.1px">发布人4</div>
<div class="abs td" style="left:961px;top:882.1px">4</div>
<div class="abs td" style="left:1178px;top:882.1px">4</div>
<svg class="abs" style="left:1394px;top:843.2px" width="94" height="94" font-family="Liberation Sans"><defs><linearGradient id="grs" x1="0" y1="0" x2="1" y2="1"><stop offset="0" stop-color="#6ccc48"/><stop offset="0.5" stop-color="#4cb03a"/><stop offset="1" stop-color="#2f8a2e"/></linearGradient></defs>
<rect width="94" height="94" fill="#fff"/>
<path d="M27 7 H42 L55 82 H42 L39.5 64 H30.5 L27 82 H15 L21 55 Q13 61 8 68 Q4 64 8 56 L23 43Z" fill="url(#grs)"/><path d="M31 54 H39 L38.5 60 H30.5Z" fill="#3a9a32"/>
<path d="M33 16 L37 52 L29 55Z" fill="#276e22" opacity="0.6"/>
<path d="M24 84 Q38 88 54 84" stroke="#d8d8d8" stroke-width="2" fill="none"/>
<path d="M52 68 Q70 76 88 62" stroke="#cfe3ea" stroke-width="1.5" fill="none"/>
<text x="56" y="38" font-size="11.5" fill="#3aa84a" font-weight="bold" font-style="italic">爱生活</text><text x="57" y="57" font-size="11.5" fill="#2e7a4a" font-weight="bold" font-style="italic">爱健康</text>
<path d="M80 18 Q90 20 86 32" stroke="#8cc850" stroke-width="1.2" fill="none"/></svg>
<div class="abs opb" style="left:1582px;top:876.1px">查看</div>
<div class="abs opb" style="left:1652px;top:876.1px">修改</div>
<div class="abs opb" style="left:1723px;top:876.1px">删除</div>
<div class="abs" style="left:208px;top:948.0px;width:1651px;height:107.8px;background:#f7f7f7"></div>
<div class="abs" style="left:208px;top:1055.8px;width:1651px;height:1px;background:#e6e6e6"></div>
<div class="abs cb" style="left:214px;top:995.4px"></div>
<div class="abs td" style="left:262px;top:990.9px">6</div>
<div class="abs td" style="left:308px;top:990.9px">留退路就没有出路</div>
<div class="abs td" style="left:528px;top:990.9px">分类名称3</div>
<div class="abs td" style="left:744px;top:990.9px">发布人3</div>
<div class="abs td" style="left:961px;top:990.9px">3</div>
<div class="abs td" style="left:1178px;top:990.9px">3</div>
<svg class="abs" style="left:1394px;top:952.0px" width="94" height="94" font-family="Liberation Sans"><defs><radialGradient id="g6" cx="0.45" cy="0.7" r="0.75"><stop offset="0" stop-color="#e4f8cc"/><stop offset="0.5" stop-color="#bdea88"/><stop offset="1" stop-color="#86cc48"/></radialGradient></defs>
<rect width="94" height="94" fill="url(#g6)"/>
<path d="M0 0 H94 V14 Q70 22 47 16 Q24 22 0 14Z" fill="#6cbb3a"/>
<g fill="#4a9a2c"><ellipse cx="10" cy="8" rx="11" ry="6" transform="rotate(25 10 8)"/><ellipse cx="36" cy="12" rx="10" ry="6" transform="rotate(-15 36 12)"/><ellipse cx="62" cy="8" rx="10" ry="6" transform="rotate(15 62 8)"/><ellipse cx="86" cy="12" rx="9" ry="7" transform="rotate(-30 86 12)"/><ellipse cx="3" cy="28" rx="5" ry="11"/><ellipse cx="91" cy="40" rx="5" ry="11"/></g>
<path d="M24 50 Q30 36 47 46 Q64 36 70 50 Q68 66 47 82 Q26 66 24 50Z" fill="#f0fae4" opacity="0.45"/>
<text x="30" y="60" font-size="17" font-weight="bold" fill="#2a7a2e" font-style="italic">生</text><text x="52" y="54" font-size="10" fill="#2e7d32" font-weight="bold">健</text><text x="30" y="78" font-size="17" font-weight="bold" fill="#2a7a2e">大</text><text x="52" y="70" font-size="10" fill="#2e7d32" font-weight="bold">康</text></svg>
<div class="abs opb" style="left:1582px;top:984.9px">查看</div>
<div class="abs opb" style="left:1652px;top:984.9px">修改</div>
<div class="abs opb" style="left:1723px;top:984.9px">删除</div>
<!--/TABLE-->
<div id="vscroll" class="abs"></div>
<!-- browser scrollbar -->
<svg class="abs" style="left:1896px;top:93px" width="20" height="923">
  <path d="M3.5 18.5 L9.5 11 L15.5 18.5Z" fill="#8a8a8a" stroke="#8a8a8a" stroke-width="1.5" stroke-linejoin="round"/>
  <rect x="4" y="29" width="11" height="668" rx="5.5" fill="#8a8a8a"/>
  <path d="M3.5 904.5 L9.5 912 L15.5 904.5Z" fill="#8a8a8a" stroke="#8a8a8a" stroke-width="1.5" stroke-linejoin="round"/>
</svg>
<!-- collapse button -->
<div class="abs" style="left:1890px;top:768px;width:30px;height:40px;border-radius:20px 0 0 20px;background:linear-gradient(90deg,#6aa6f4,#3f83f0)"></div>
<svg class="abs" style="left:1898px;top:778px" width="16" height="20"><path d="M12 4.5 L7 11.5 L12 18.5" stroke="#fff" stroke-width="2.4" fill="none" stroke-linecap="round" stroke-linejoin="round"/></svg>
<!-- window bottom strip -->
<div class="abs" style="left:0;top:1016px;width:1920px;height:3px;background:#f4f2f3;border-bottom:1px solid #dcd4d8"></div>
<div id="taskbar" class="abs"></div>
<!-- timer bubble -->
<div class="abs" style="left:1766px;top:977px;width:61px;height:61px;border-radius:50%;background:#f4fbff;box-shadow:0 1px 3px rgba(0,0,0,0.12)"></div>
<div class="abs" style="left:1768px;top:979px;width:57px;height:57px;border-radius:50%;background:linear-gradient(200deg,#3a82ec 0%,#4596ee 50%,#5fbcf7 100%)"></div>
<div class="abs" style="left:1766px;top:995px;width:61px;text-align:center;font-size:16px;line-height:22px;color:#fff">01:29</div>
<svg class="abs" style="left:1766px;top:977px" width="61" height="61"><path d="M40 14 Q45 16 48 20" stroke="#d8ecff" stroke-width="1" fill="none"/></svg>
<!-- taskbar icons -->
<svg class="abs" style="left:0;top:1019px" width="1920" height="61">
  <defs>
    <linearGradient id="wg" x1="0" y1="0" x2="1" y2="1"><stop offset="0" stop-color="#4cc9f4"/><stop offset="1" stop-color="#1677d4"/></linearGradient>
    <linearGradient id="eg" x1="0" y1="0" x2="1" y2="1"><stop offset="0" stop-color="#38b8e8"/><stop offset="0.6" stop-color="#44c97a"/><stop offset="1" stop-color="#8ee05a"/></linearGradient>
  </defs>
  <!-- windows -->
  <g fill="url(#wg)"><rect x="503" y="17" width="13.8" height="13.8" rx="1.5"/><rect x="518.3" y="17" width="13.8" height="13.8" rx="1.5"/><rect x="503" y="32.3" width="13.8" height="13.8" rx="1.5"/><rect x="518.3" y="32.3" width="13.8" height="13.8" rx="1.5"/></g>
  <!-- search pill -->
  <rect x="549.5" y="11.5" width="272" height="38" rx="19" fill="#fbf7f0" stroke="#e8e0da" stroke-width="1"/>
  <circle cx="571" cy="29.5" r="6.8" fill="none" stroke="#1a1a1a" stroke-width="2"/>
  <path d="M576 34.5 L580.5 39" stroke="#1a1a1a" stroke-width="2.2" stroke-linecap="round"/>
  <!-- eiffel -->
  <g transform="translate(760,15)">
    <path d="M2 30 Q6 24 12 26 Q18 22 24 27 Q32 23 38 27 Q46 24 52 30 V34 H2Z" fill="#6ea83a"/>
    <path d="M4 34 H50 Q44 38 27 37 Q10 38 4 34Z" fill="#3e9fb8"/>
    <path d="M27 1 L31 28 H23Z" fill="none" stroke="#8a6a5a" stroke-width="1.6"/>
    <path d="M24 16 H30 M22 22 H32" stroke="#8a6a5a" stroke-width="1.2"/>
    <g stroke="#8888e8" stroke-width="0.9"><path d="M8 3 V17 M1 10 H15 M3 5 L13 15 M13 5 L3 15"/></g>
    <g stroke="#e04848" stroke-width="0.9"><path d="M42 7 V17 M37 12 H47 M38.5 8.5 L45.5 15.5 M45.5 8.5 L38.5 15.5"/></g>
  </g>
  <!-- explorer -->
  <path d="M839 19.5 Q839 18 840.5 18 H850 L853 21 H867.5 Q869 21 869 22.5 V43 Q869 44.7 867.5 44.7 H840.5 Q839 44.7 839 43Z" fill="#f3c63f"/>
  <path d="M839 23 H869 V43 Q869 44.7 867.5 44.7 H840.5 Q839 44.7 839 43Z" fill="#fad65a"/>
  <rect x="844" y="35" width="20" height="9.7" rx="1.5" fill="#1f8ad8"/>
  <rect x="847" y="38" width="14" height="2" fill="#0f5fa8"/>
  <!-- edge highlight -->
  <rect x="885" y="7" width="48" height="48" rx="5" fill="#fbf5e2"/>
  <rect x="899.5" y="51.3" width="19.3" height="3.2" rx="1.6" fill="#1f7ad0"/>
  <defs>
    <linearGradient id="edw" x1="0" y1="0" x2="1" y2="0.6"><stop offset="0" stop-color="#3cc0f2"/><stop offset="0.55" stop-color="#40d0b0"/><stop offset="1" stop-color="#6ef06a"/></linearGradient>
    <linearGradient id="eds" x1="0" y1="0" x2="1" y2="0.3"><stop offset="0" stop-color="#2f92e2"/><stop offset="0.5" stop-color="#1d64bc"/><stop offset="1" stop-color="#1a4e9a"/></linearGradient>
  </defs>
  <path d="M894 31 A15 15 0 0 0 909 46 Q918 46 922.5 38 Q915 41.5 910.5 38.5 Q906 35.5 906 31 Q906 27 909 26 Q900 26 896 30Z" fill="url(#eds)"/>
  <path d="M894 31 Q895 16 909.5 16 Q924 16 924 30 Q924 36 917.5 36 Q912.5 36 912.5 31.5 Q912.5 27 909 26 Q900 25 894 31Z" fill="url(#edw)"/>
  <!-- store -->
  <path d="M953 22 Q948.8 22 948.8 26 V42 Q948.8 46 953 46 H974 Q978 46 978 42 V26 Q978 22 974 22Z" fill="#1e5aa8"/>
  <path d="M957 22 V18.5 Q957 16.5 959 16.5 H968 Q970 16.5 970 18.5 V22" fill="none" stroke="#3fb0ee" stroke-width="2"/>
  <rect x="958" y="27" width="5" height="5" fill="#f25022"/><rect x="964" y="27" width="5" height="5" fill="#7fba00"/><rect x="958" y="33" width="5" height="5" fill="#00a4ef"/><rect x="964" y="33" width="5" height="5" fill="#ffb900"/>
  <!-- snip -->
  <rect x="1004.5" y="16.5" width="19" height="19" fill="#ececec"/>
  <path d="M1006 18 H1021 M1006 18 V33" stroke="#c83a2a" stroke-width="2.2" stroke-dasharray="2.5 1.5"/>
  <path d="M1023 23 L1020 40 M1023 29 L1030 38" stroke="#9a9a9a" stroke-width="2"/>
  <circle cx="1020" cy="42.5" r="2.8" fill="none" stroke="#3aa6e0" stroke-width="1.5"/>
  <circle cx="1032" cy="38.5" r="2.8" fill="none" stroke="#3aa6e0" stroke-width="1.5"/>
  <!-- wps -->
  <path d="M1059 21 H1065.5 L1070 34 L1074 25 H1078 L1082 34 L1086 21 H1089 L1083 41 H1079 L1076 33 L1072.5 41 H1068Z" fill="#e0322a"/>
  <path d="M1079 21 H1089 L1086 30Z" fill="#f07a30"/>
  <!-- todesk -->
  <rect x="1114" y="16" width="30" height="30" rx="6" fill="#fdfdfd"/>
  <path d="M1118 24.5 H1130.5 L1128 34 V42 H1122 V31 H1117Z" fill="#1a6ff0"/>
  <path d="M1126 23 L1140.5 20 L1138 34 H1131.5 L1133 28.5 H1125.5Z" fill="#26d0b8"/>
  <!-- P -->
  <rect x="1168.7" y="16" width="30.3" height="30" rx="5" fill="#2e97e0"/>
  <path d="M1179.5 39.5 V22.5 H1186 Q1191.5 22.5 1191.5 27.5 Q1191.5 32.5 1186 32.5 H1179.5" fill="none" stroke="#fff" stroke-width="2.4"/>
  <!-- IJ -->
  <rect x="1225.8" y="17.8" width="26.2" height="25.8" fill="#e8358a"/>
  <rect x="1226.8" y="18.8" width="24.2" height="23.8" fill="#3b7ef0"/>
  <rect x="1228.5" y="20.5" width="21" height="20.5" fill="#0a0610"/>
  <text x="1231" y="30" font-size="8" font-weight="bold" fill="#fff" font-family="Liberation Mono">IJ</text>
  <rect x="1231" y="36.5" width="7" height="1.4" fill="#fff"/>
  <!-- notepad -->
  <rect x="1283" y="18" width="22" height="27" rx="1.5" fill="#5ec9d8"/>
  <rect x="1283" y="43" width="22" height="2" fill="#9a5a3a"/>
  <g fill="#2a7f9a"><circle cx="1286.5" cy="17.5" r="1.4"/><circle cx="1291.5" cy="17.5" r="1.4"/><circle cx="1296.5" cy="17.5" r="1.4"/><circle cx="1301.5" cy="17.5" r="1.4"/></g>
  <path d="M1287 25 H1301 M1287 30 H1301 M1287 35 H1301" stroke="#1f7f98" stroke-width="1.6"/>
  <!-- file -->
  <path d="M1338.5 16.5 H1354 L1360 22.5 V44.5 H1338.5Z" fill="#fafafa" stroke="#b8b8b8" stroke-width="1"/>
  <path d="M1354 16.5 V22.5 H1360" fill="#e8e8e8" stroke="#b8b8b8" stroke-width="1"/>
  <!-- eV -->
  <path d="M1403.5 18 Q1410 15 1413 21 Q1419 23 1417 30 Q1420 37 1413 40 Q1410 46 1403.5 43 Q1397 46 1394 40 Q1388 37 1390 30 Q1388 23 1394 21 Q1397 15 1403.5 18Z" fill="#fff" stroke="#3cb47a" stroke-width="2"/>
  <path d="M1389.5 31 Q1390 26 1394 25" stroke="#f08a3a" stroke-width="1.5" fill="none"/>
  <text x="1396" y="35" font-size="11" font-style="italic" fill="#2a5ab8" font-family="Liberation Serif">ev</text>
  <!-- running dashes -->
  <g fill="#7b7b80"><rect x="1125" y="51" width="8" height="3" rx="1.5"/><rect x="1180" y="51" width="8" height="3" rx="1.5"/><rect x="1235" y="51" width="8" height="3" rx="1.5"/><rect x="1290" y="51" width="8" height="3" rx="1.5"/><rect x="1345" y="51" width="8" height="3" rx="1.5"/><rect x="1400" y="51" width="8" height="3" rx="1.5"/></g>
  <!-- tray -->
  <path d="M1541 34.5 L1547 28.5 L1553 34.5" stroke="#1a1a1a" stroke-width="1.5" fill="none"/>
  <path d="M1578 36 Q1576 30 1582 28.5 Q1584 23 1590 24 Q1595.5 25 1595.5 30 Q1598.5 31 1597.5 35 Q1597 37 1594 37 H1581 Q1578 37 1578 36Z" fill="#bdbdbd" stroke="#1a1a1a" stroke-width="1.3"/>
  <path d="M1579 24 L1596 40" stroke="#1a1a1a" stroke-width="1.4"/>
  <rect x="1623.5" y="20.5" width="6" height="12" rx="3" fill="none" stroke="#3b6fc8" stroke-width="1.6"/>
  <path d="M1620.5 29 Q1620.5 35.5 1626.5 35.5 Q1632.5 35.5 1632.5 29 M1626.5 35.5 V40" stroke="#3b6fc8" stroke-width="1.6" fill="none"/>
  <text x="1657" y="38" font-size="18" fill="#1a1a1a">英</text>
  <path d="M1697 29 Q1707 21 1717 29 M1700 32 Q1707 26.5 1714 32 M1703 35 Q1707 32 1711 35" stroke="#1a1a1a" stroke-width="1.5" fill="none"/>
  <circle cx="1707" cy="38" r="1.2" fill="#1a1a1a"/>
  <path d="M1727 27.5 H1730 L1735 23.5 V38.5 L1730 34.5 H1727Z" fill="none" stroke="#1a1a1a" stroke-width="1.3"/>
  <path d="M1738 27 Q1740 31 1738 35 M1741 24.5 Q1744.5 31 1741 37.5" stroke="#1a1a1a" stroke-width="1.2" fill="none"/>
  <rect x="1758.5" y="25.5" width="17" height="11" rx="2" fill="none" stroke="#1a1a1a" stroke-width="1.3"/>
  <rect x="1760.5" y="27.5" width="13" height="7" rx="0.8" fill="#1a1a1a"/>
  <rect x="1776" y="29" width="2" height="4" rx="0.8" fill="#1a1a1a"/>
  <path d="M1762.5 19 L1758.5 26.5 H1762 L1759.5 33" stroke="#e4e8f0" stroke-width="3" fill="none"/>
  <path d="M1762.5 19 L1758.5 26.5 H1762 L1759.5 33" stroke="#1a1a1a" stroke-width="1.2" fill="none"/>
  <text x="1865" y="26" font-size="15" text-anchor="end" fill="#1a1a1a" font-family="Liberation Sans">22:30</text>
  <text x="1865" y="46" font-size="15" text-anchor="end" fill="#1a1a1a" font-family="Liberation Sans">2025/3/31</text>
  <path d="M1879 36 Q1880 34 1880 30 Q1880 24 1885.5 24 Q1891 24 1891 30 Q1891 34 1892 36Z" fill="none" stroke="#1a1a1a" stroke-width="1.3"/>
  <path d="M1883.5 38.5 Q1885.5 40.5 1887.5 38.5" stroke="#1a1a1a" stroke-width="1.2" fill="none"/>
  <path d="M1888 21.5 H1892 L1888 26 H1892.5" stroke="#e2e6ef" stroke-width="2.6" fill="none"/>
  <path d="M1888 21.5 H1892 L1888 26 H1892.5" stroke="#1a1a1a" stroke-width="1.1" fill="none"/>
  <path d="M1893 16.5 H1896 L1893 19.8 H1896.3" stroke="#1a1a1a" stroke-width="1" fill="none"/>
</svg>

<div class="abs" style="left:593px;top:1037px;font-size:19px;line-height:26px;color:#555">搜索</div>
</body></html>
